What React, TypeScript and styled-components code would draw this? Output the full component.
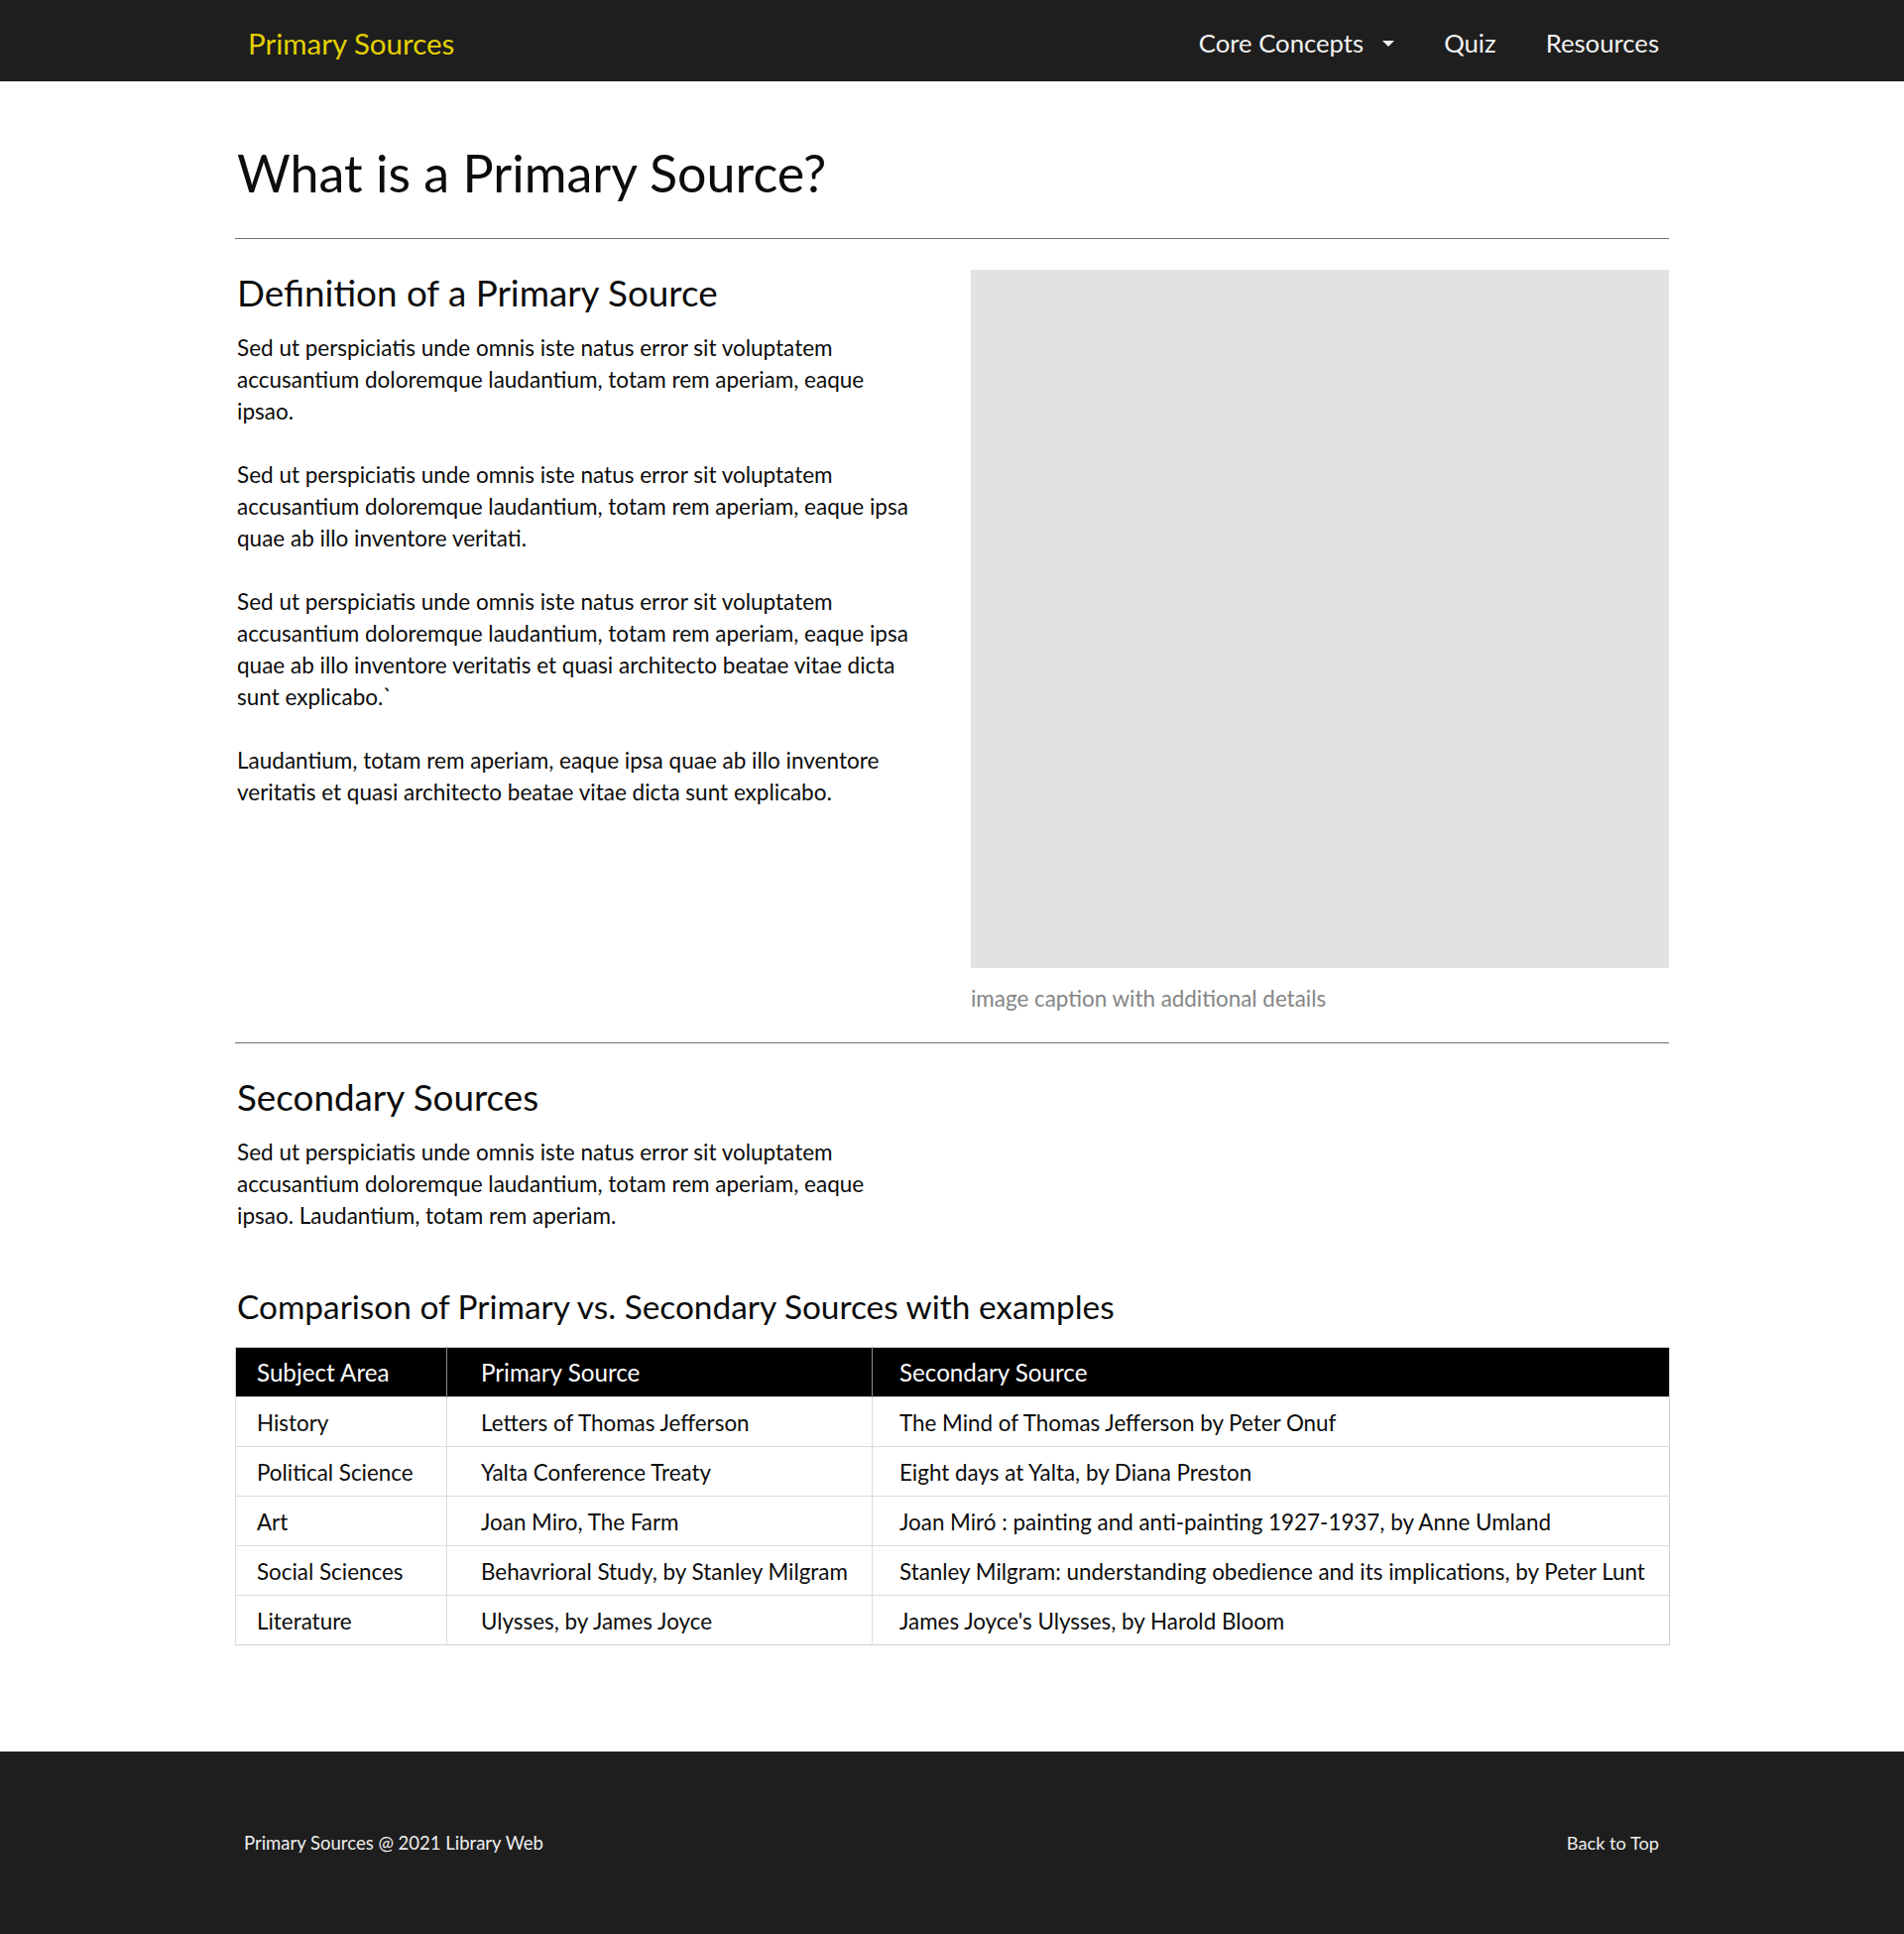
import React from "react";
import styled, { createGlobalStyle } from "styled-components";

const Global = createGlobalStyle`
  html, body { margin: 0; padding: 0; background: #ffffff; }
  body { font-family: "Lato", "Open Sans", sans-serif; color: #0c0c0c; }
  * { box-sizing: border-box; }
`;

const NavBar = styled.header`
  background: #1e1e1e;
  height: 82px;
`;

const NavInner = styled.div`
  max-width: 1446px;
  height: 100%;
  margin: 0 auto;
  padding: 4px 10px 0 13px;
  display: flex;
  align-items: center;
  justify-content: space-between;
`;

const Brand = styled.a`
  color: #e4d000;
  font-size: 29.5px;
  text-decoration: none;
`;

const NavList = styled.nav`
  display: flex;
  align-items: center;
  gap: 50px;
`;

const NavLink = styled.a`
  color: #f2f2f2;
  font-size: 25.7px;
  text-decoration: none;
  display: flex;
  align-items: center;
  gap: 19px;
`;

const Caret = styled.span`
  width: 0;
  height: 0;
  border-left: 6.5px solid transparent;
  border-right: 6.5px solid transparent;
  border-top: 6px solid #f2f2f2;
  margin-top: 2px;
`;

const Main = styled.main`
  max-width: 1446px;
  margin: 0 auto;
  padding-bottom: 107px;
`;

const Title = styled.h1`
  margin: 61px 0 0 2px;
  font-size: 52px;
  line-height: 1.2;
  font-weight: 400;
`;

const Rule = styled.hr<{ $top: number }>`
  margin: ${(p) => p.$top}px 0 32px;
  border: 0;
  border-top: 1px solid #717171;
`;

const TwoCol = styled.section`
  display: grid;
  grid-template-columns: 1fr 704px;
  gap: 38px;
  align-items: start;
`;

const TextCol = styled.div`
  padding-left: 2px;
  max-width: 690px;
`;

const Heading = styled.h2<{ $size?: number; $top?: number; $bottom?: number }>`
  margin: ${(p) => p.$top ?? 0}px 0 ${(p) => p.$bottom ?? 17}px;
  font-size: ${(p) => p.$size ?? 36.8}px;
  line-height: 1.2;
  font-weight: 400;
`;

const Para = styled.p`
  margin: 0 0 32px;
  font-size: 22.5px;
  line-height: 32px;
`;

const Figure = styled.figure`
  margin: -1px 0 0;
`;

const Placeholder = styled.div`
  width: 704px;
  height: 704px;
  background: #e2e2e2;
`;

const Caption = styled.figcaption`
  margin-top: 15px;
  font-size: 22.4px;
  line-height: 32px;
  color: #858585;
`;

const Section = styled.section`
  padding-left: 2px;
`;

const NarrowText = styled.div`
  max-width: 688px;
`;

const Table = styled.table`
  border-collapse: collapse;
  table-layout: fixed;
  border: 1px solid #cfcfcf;
  margin-left: -2px;
  width: calc(100% + 2px);
`;

const HeadCell = styled.th<{ $pad: number }>`
  background: #000;
  color: #fff;
  font-weight: 400;
  text-align: left;
  font-size: 24.2px;
  height: 50px;
  padding: 1px 0 0 ${(p) => p.$pad}px;
  border-left: 1px solid #8a8a8a;
  &:first-child { border-left: 0; }
`;

const Cell = styled.td<{ $pad: number }>`
  font-size: 22.4px;
  height: 50px;
  padding: 3px 0 0 ${(p) => p.$pad}px;
  border-top: 1px solid #dcdcdc;
  border-left: 1px solid #dcdcdc;
  white-space: nowrap;
`;

const Footer = styled.footer`
  background: #1e1e1e;
  height: 184px;
`;

const FooterInner = styled.div`
  max-width: 1446px;
  height: 100%;
  margin: 0 auto;
  padding: 0 10px 0 9px;
  display: flex;
  align-items: center;
  justify-content: space-between;
  color: #eeeeee;
  font-size: 18.5px;
`;

const FooterLink = styled.a`
  color: #eeeeee;
  font-size: 18.2px;
  text-decoration: none;
`;

const pads = [21, 34, 27];
const widths = [213, 429, 804];

const rows = [
  ["History", "Letters of Thomas Jefferson", "The Mind of Thomas Jefferson by Peter Onuf"],
  ["Political Science", "Yalta Conference Treaty", "Eight days at Yalta, by Diana Preston"],
  ["Art", "Joan Miro, The Farm", "Joan Miró : painting and anti-painting 1927-1937, by Anne Umland"],
  [
    "Social Sciences",
    "Behavrioral Study, by Stanley Milgram",
    "Stanley Milgram: understanding obedience and its implications, by Peter Lunt",
  ],
  ["Literature", "Ulysses, by James Joyce", "James Joyce's Ulysses, by Harold Bloom"],
];

export default function App() {
  return (
    <>
      <Global />
      <NavBar>
        <NavInner>
          <Brand href="#">Primary Sources</Brand>
          <NavList>
            <NavLink href="#">
              Core Concepts <Caret />
            </NavLink>
            <NavLink href="#">Quiz</NavLink>
            <NavLink href="#">Resources</NavLink>
          </NavList>
        </NavInner>
      </NavBar>
      <Main>
        <Title>What is a Primary Source?</Title>
        <Rule $top={35} />
        <TwoCol>
          <TextCol>
            <Heading>Definition of a Primary Source</Heading>
            <Para>
              Sed ut perspiciatis unde omnis iste natus error sit voluptatem accusantium doloremque
              laudantium, totam rem aperiam, eaque ipsao.
            </Para>
            <Para>
              Sed ut perspiciatis unde omnis iste natus error sit voluptatem accusantium doloremque
              laudantium, totam rem aperiam, eaque ipsa quae ab illo inventore veritati.
            </Para>
            <Para>
              Sed ut perspiciatis unde omnis iste natus error sit voluptatem accusantium doloremque
              laudantium, totam rem aperiam, eaque ipsa quae ab illo inventore veritatis et quasi
              architecto beatae vitae dicta sunt explicabo.`
            </Para>
            <Para>
              Laudantium, totam rem aperiam, eaque ipsa quae ab illo inventore veritatis et quasi
              architecto beatae vitae dicta sunt explicabo.
            </Para>
          </TextCol>
          <Figure>
            <Placeholder />
            <Caption>image caption with additional details</Caption>
          </Figure>
        </TwoCol>
        <Rule $top={28} />
        <Section>
          <Heading>Secondary Sources</Heading>
          <NarrowText>
            <Para>
              Sed ut perspiciatis unde omnis iste natus error sit voluptatem accusantium doloremque
              laudantium, totam rem aperiam, eaque ipsao. Laudantium, totam rem aperiam.
            </Para>
          </NarrowText>
          <Heading $size={33.4} $top={55} $bottom={21}>
            Comparison of Primary vs. Secondary Sources with examples
          </Heading>
          <Table>
            <colgroup>
              {widths.map((w, i) => (
                <col key={i} style={{ width: w }} />
              ))}
            </colgroup>
            <thead>
              <tr>
                <HeadCell $pad={pads[0]}>Subject Area</HeadCell>
                <HeadCell $pad={pads[1]}>Primary Source</HeadCell>
                <HeadCell $pad={pads[2]}>Secondary Source</HeadCell>
              </tr>
            </thead>
            <tbody>
              {rows.map((r) => (
                <tr key={r[0]}>
                  {r.map((c, i) => (
                    <Cell key={i} $pad={pads[i]}>
                      {c}
                    </Cell>
                  ))}
                </tr>
              ))}
            </tbody>
          </Table>
        </Section>
      </Main>
      <Footer>
        <FooterInner>
          <span>Primary Sources @ 2021 Library Web</span>
          <FooterLink href="#">Back to Top</FooterLink>
        </FooterInner>
      </Footer>
    </>
  );
}
